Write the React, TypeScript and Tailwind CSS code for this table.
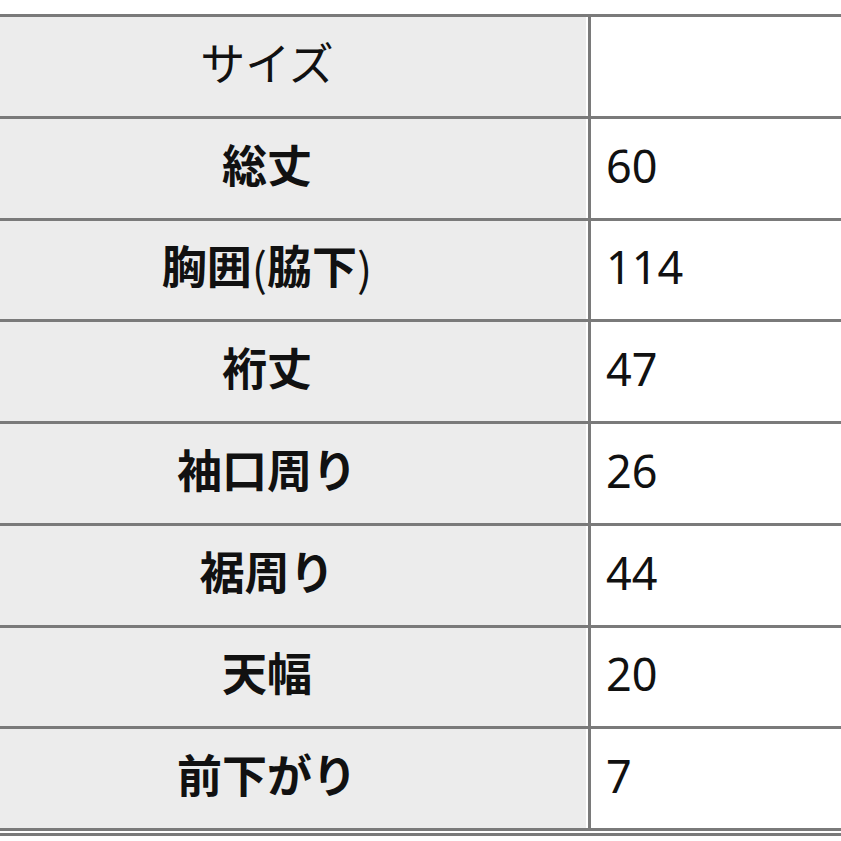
import React from "react";

const rows: [string, string, boolean][] = [
  ["サイズ", "", false],
  ["総丈", "60", true],
  ["胸囲(脇下)", "114", true],
  ["裄丈", "47", true],
  ["袖口周り", "26", true],
  ["裾周り", "44", true],
  ["天幅", "20", true],
  ["前下がり", "7", true],
];

function Label({ text }: { text: string }) {
  const parts = text.split(/([()])/);
  return (
    <>
      {parts.map((p, i) =>
        p === "(" || p === ")" ? (
          <span
            key={i}
            className="font-normal"
            style={{ fontFamily: '"Noto Sans CJK JP", sans-serif' }}
          >
            {p}
          </span>
        ) : (
          <React.Fragment key={i}>{p}</React.Fragment>
        )
      )}
    </>
  );
}

export default function App() {
  return (
    <div
      className="w-[841px] h-[841px] bg-white overflow-hidden pt-[14px] text-[#111]"
      style={{ fontFamily: '"Noto Sans", "Noto Sans CJK JP", sans-serif' }}
    >
      <div className="flex flex-col">
        {rows.map(([label, value, bold], i) => (
          <div
            key={i}
            className="flex h-[101.75px] border-t-[3px] border-[#7a7a7a]"
          >
            <div
              className={`w-[588px] shrink-0 bg-[#ececec] border-r-[2px] border-white flex items-center justify-center pr-[52px] pb-[6px] text-[45px] leading-none ${
                bold ? "font-bold" : "font-normal"
              }`}
            >
              <Label text={label} />
            </div>
            <div className="flex-1 border-l-[3px] border-[#7a7a7a] bg-white flex items-center pl-[15px] pb-[6px] text-[45px] leading-none">
              {value}
            </div>
          </div>
        ))}
        <div className="border-t-[3px] border-[#7a7a7a] h-[5px]" />
        <div className="border-t-[3px] border-[#7a7a7a]" />
      </div>
    </div>
  );
}
